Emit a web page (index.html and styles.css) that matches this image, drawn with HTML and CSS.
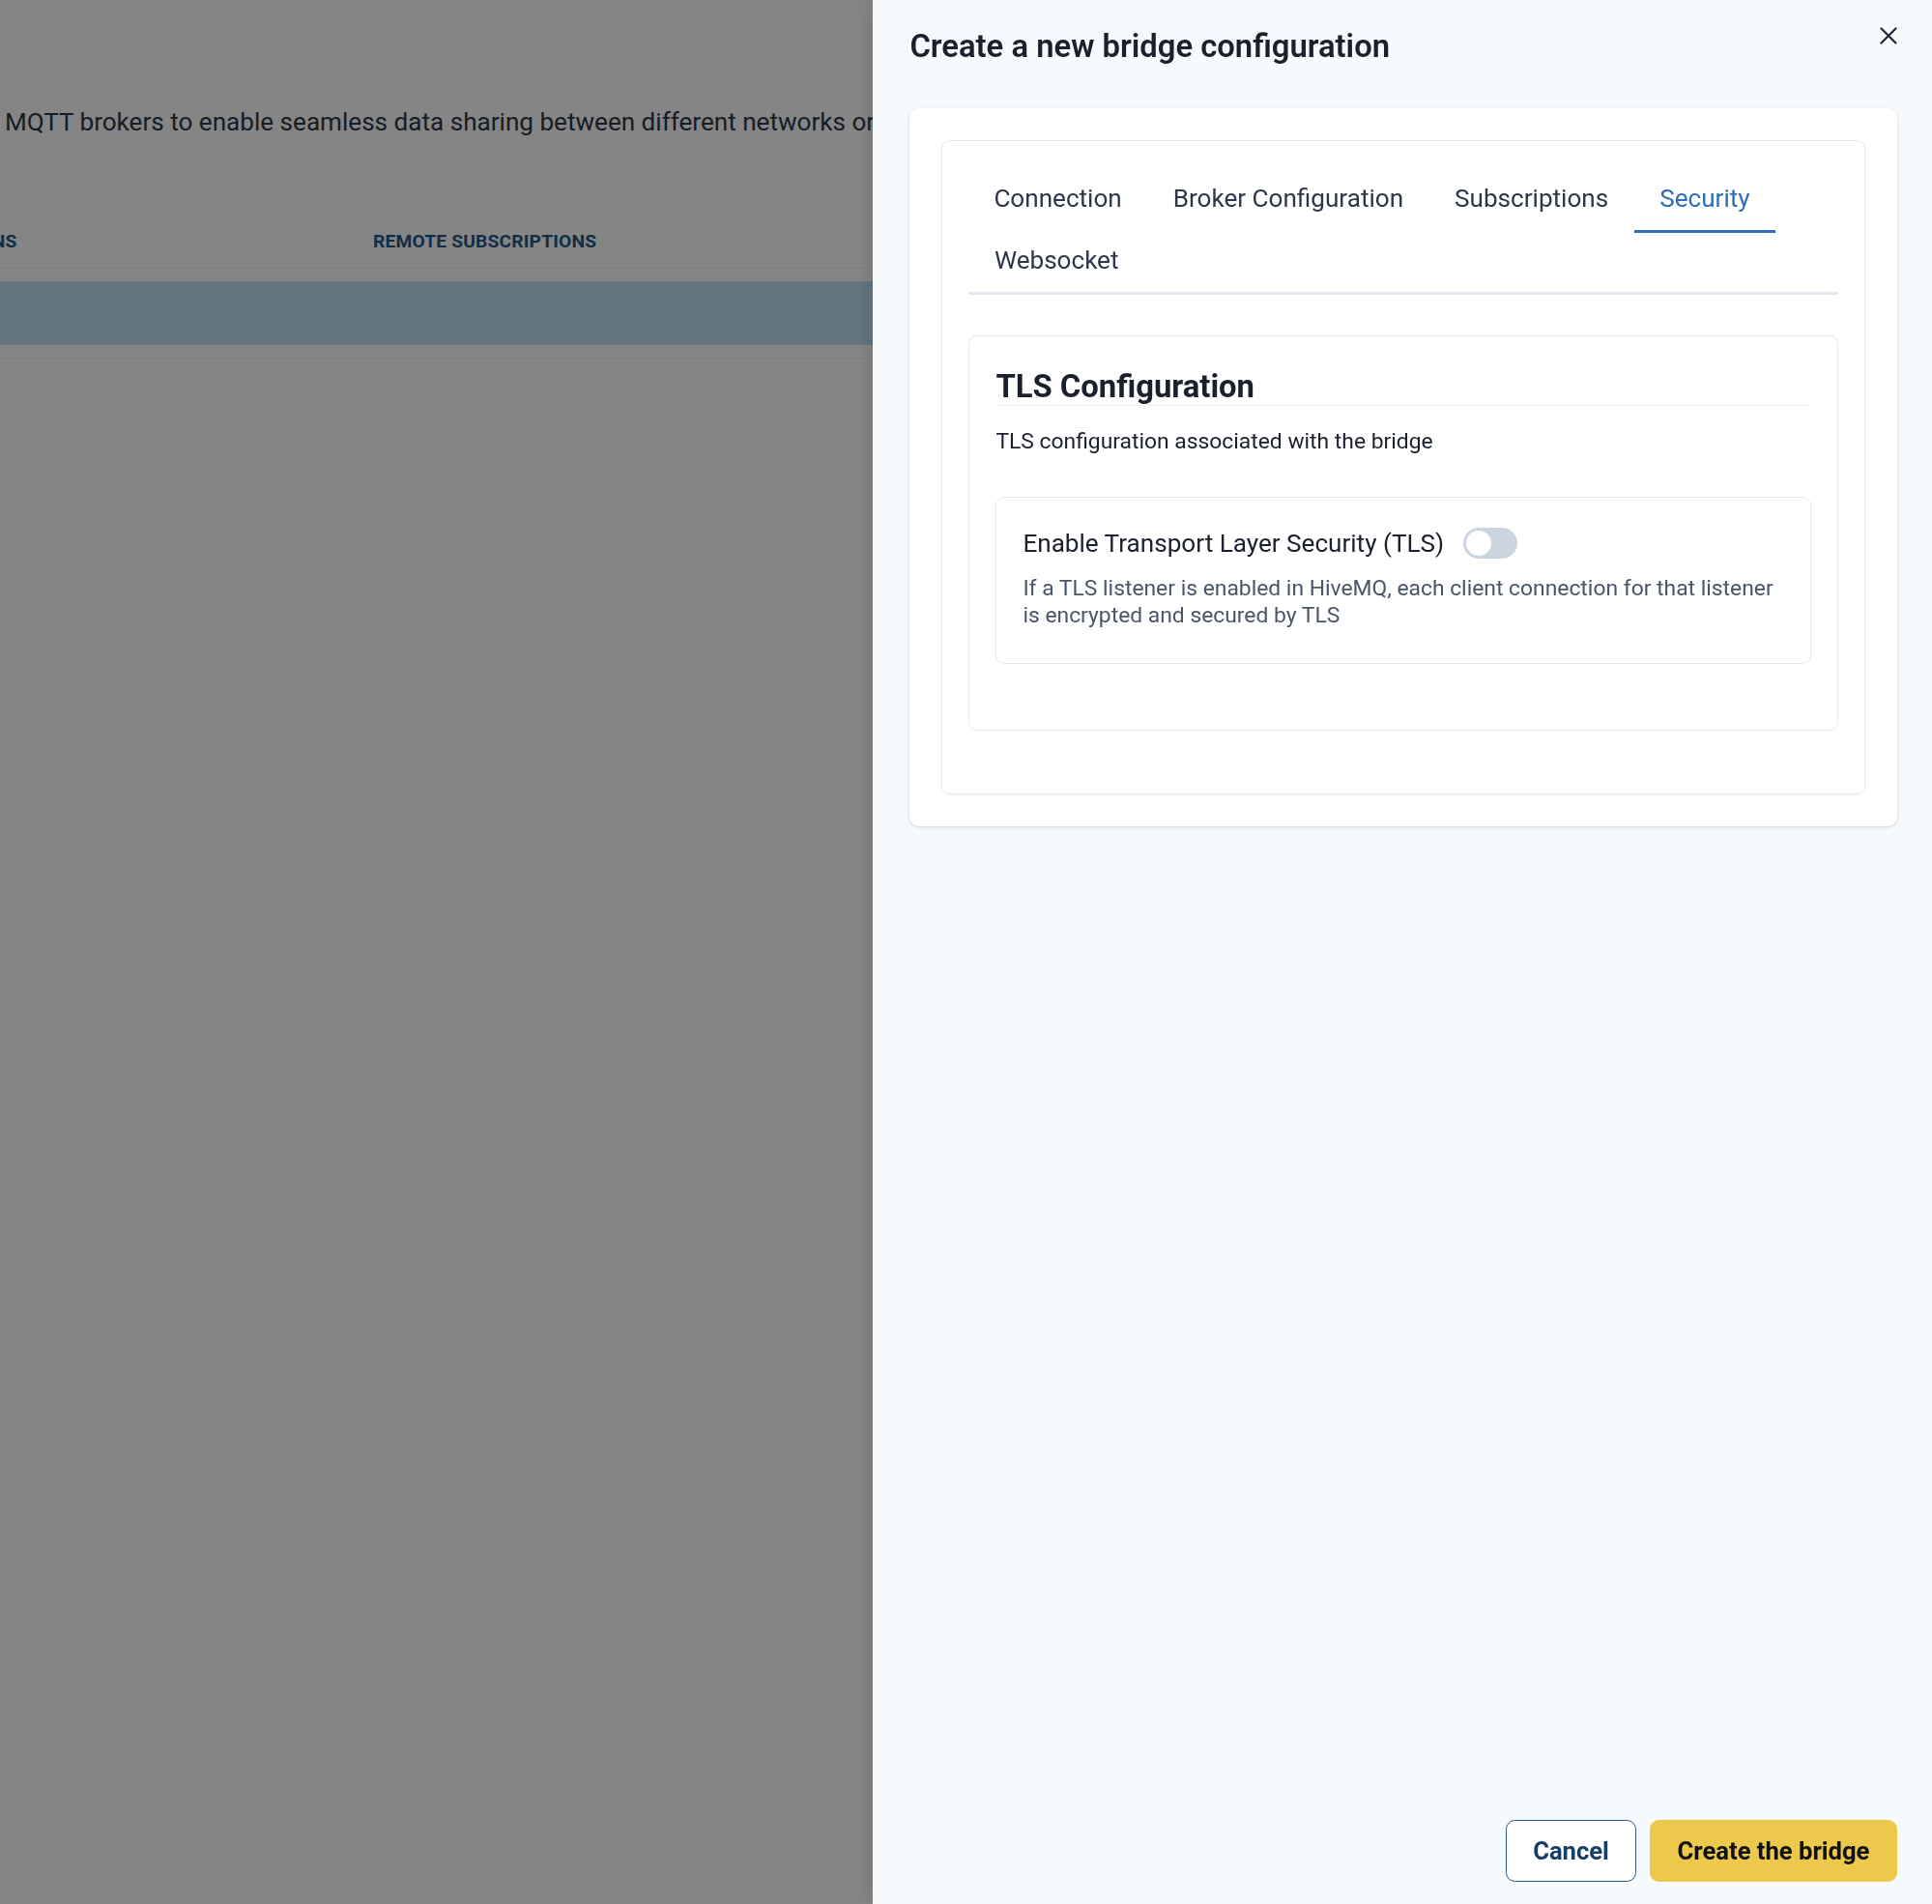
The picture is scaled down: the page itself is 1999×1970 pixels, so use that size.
FILE: index.html
```html
<!DOCTYPE html>
<html lang="en">
<head>
    <meta charset="UTF-8">
    <meta name="viewport" content="width=device-width, initial-scale=1.0">
    <title>Bridges</title>
    <link rel="stylesheet" href="styles.css">
</head>
<body>
    <!-- page behind the drawer -->
    <div class="page">
        <p class="intro">MQTT brokers to enable seamless data sharing between different networks or locations.</p>
        <div class="table">
            <div class="thead">
                <div class="th th-local">LOCAL SUBSCRIPTIONS</div>
                <div class="th">REMOTE SUBSCRIPTIONS</div>
            </div>
            <div class="trow">
                <div class="row-fill"></div>
            </div>
        </div>
    </div>

    <div class="overlay"></div>

    <!-- drawer -->
    <aside class="drawer">
        <header class="drawer-header">
            <h2>Create a new bridge configuration</h2>
            <button class="close-btn" aria-label="Close">
                <svg viewBox="0 0 24 24" width="20" height="20">
                    <path d="M3 3 L21 21 M21 3 L3 21" stroke="#1f2533" stroke-width="2.6" stroke-linecap="round" fill="none"/>
                </svg>
            </button>
        </header>

        <div class="drawer-body">
            <div class="card-outer">
                <div class="card-inner">
                    <div class="tablist">
                        <div class="tab">Connection</div>
                        <div class="tab">Broker Configuration</div>
                        <div class="tab">Subscriptions</div>
                        <div class="tab active">Security</div>
                        <div class="tab">Websocket</div>
                    </div>

                    <div class="tabpanel">
                        <div class="section">
                            <h3 class="section-title">TLS Configuration</h3>
                            <p class="section-desc">TLS configuration associated with the bridge</p>

                            <div class="field">
                                <div class="field-label">
                                    <span>Enable Transport Layer Security (TLS)</span>
                                    <span class="switch"><span class="thumb"></span></span>
                                </div>
                                <p class="field-help">If a TLS listener is enabled in HiveMQ, each client connection for that listener is encrypted and secured by TLS</p>
                            </div>
                        </div>
                    </div>
                </div>
            </div>
        </div>

        <footer class="drawer-footer">
            <button class="btn btn-outline">Cancel</button>
            <button class="btn btn-primary">Create the bridge</button>
        </footer>
    </aside>
</body>
</html>
```

FILE: styles.css
```css
*{
    margin: 0;
    padding: 0;
    box-sizing: border-box;
}
body{
    width: 1999px;
    height: 1970px;
    overflow: hidden;
    background: #fff;
    font-family: Roboto, "Liberation Sans", sans-serif;
    color: #1a202c;
}

/* page behind */
.page{
    padding-top: 107px;
}
.intro{
    padding-left: 5px;
    font-size: 26.1px;
    line-height: 38.4px;
    white-space: nowrap;
    color: #2d3748;
}
.table{
    margin-top: 79px;
    margin-left: -200px;
    width: 1200px;
}
.thead{
    display: flex;
    border-bottom: 1.6px solid #edf2f7;
}
.th{
    padding: 14px 38.4px 15px;
    font-size: 19.2px;
    line-height: 24px;
    font-weight: 700;
    letter-spacing: 0.01em;
    color: #22598a;
    white-space: nowrap;
}
.th-local{
    width: 256px;
    padding-right: 38.4px;
    padding-left: 0;
    text-align: right;
    direction: rtl;
    overflow: hidden;
    margin-right: 291.6px;
}
.trow{
    padding: 13px 0;
    border-bottom: 1.6px solid #edf2f7;
}
.row-fill{
    height: 66px;
    background: #bee3f8;
}

.overlay{
    position: fixed;
    inset: 0;
    background: rgba(0,0,0,0.48);
}

/* drawer */
.drawer{
    position: fixed;
    top: 0;
    right: 0;
    bottom: 0;
    width: 1096px;
    background: #f7fafc;
    display: flex;
    flex-direction: column;
    box-shadow: 0 0 20px rgba(0,0,0,0.15);
}
.drawer-header{
    padding: 24px 38.4px 27.2px;
}
.drawer-header h2{
    font-size: 32.8px;
    line-height: 48px;
    font-weight: 600;
    color: #1a202c;
}
.close-btn{
    position: absolute;
    top: 11px;
    right: 19.2px;
    width: 51.2px;
    height: 51.2px;
    border: 0;
    background: transparent;
    display: flex;
    align-items: center;
    justify-content: center;
}
.drawer-body{
    flex: 1;
    padding: 12.8px 36px 12.8px 38.4px;
}
.card-outer{
    background: #fff;
    border-radius: 10px;
    padding: 33px;
    box-shadow: 0 1px 4px rgba(0,0,0,0.1), 0 1px 2px rgba(0,0,0,0.06);
}
.card-inner{
    border: 1.6px solid #e2e8f0;
    border-radius: 9px;
    padding: 27px 27px 27px;
    box-shadow: 0 1px 2px rgba(0,0,0,0.03);
}

.tablist{
    display: flex;
    flex-wrap: wrap;
    border-bottom: 3.2px solid #e2e8f0;
}
.tab{
    padding: 12.8px 26.5px 12.8px 26.5px;
    font-size: 26.1px;
    line-height: 39px;
    color: #2d3748;
    border-bottom: 3.2px solid transparent;
    margin-bottom: -3.2px;
}
.tab:first-child{
    padding-left: 26px;
}
.tab.active{
    color: #2f6fb7;
    border-bottom-color: #2f6fb7;
}
.tabpanel{
    padding: 42px 0 38px;
}

.section{
    border: 1.6px solid #e2e8f0;
    border-radius: 9px;
    padding: 33px 27px 68px;
}
.section-title{
    font-size: 32.8px;
    line-height: 38.4px;
    font-weight: 700;
    color: #1a202c;
    border-bottom: 1.6px solid #edf2f7;
}
.section-desc{
    margin-top: 20px;
    font-size: 22.85px;
    line-height: 33.6px;
    color: #1a202c;
}
.field{
    margin-top: 40px;
    border: 1.6px solid #e2e8f0;
    border-radius: 9px;
    padding: 28px 27px 35px;
}
.field-label{
    display: flex;
    align-items: center;
    gap: 20px;
    font-size: 26.1px;
    line-height: 38.4px;
    color: #1a202c;
}
.switch{
    width: 56px;
    height: 32.6px;
    padding: 3.3px;
    border-radius: 17px;
    background: #cbd5e0;
    display: inline-flex;
}
.thumb{
    width: 26px;
    height: 26px;
    border-radius: 50%;
    background: #fff;
}
.field-help{
    margin-top: 14px;
    max-width: 786px;
    font-size: 22.85px;
    line-height: 28px;
    color: #4a5568;
}

.drawer-footer{
    display: flex;
    justify-content: flex-end;
    gap: 14px;
    padding: 16px 36px 23px;
}
.btn{
    height: 64px;
    padding: 0 25.6px;
    border-radius: 9.6px;
    font-family: Roboto, "Liberation Sans", sans-serif;
    font-size: 25.6px;
    font-weight: 700;
    cursor: pointer;
}
.btn-outline{
    width: 135px;
    background: #fff;
    border: 1.6px solid #2c5a85;
    color: #163e66;
}
.btn-primary{
    width: 256px;
    background: #ecc94b;
    border: 0;
    color: #111;
}
```
